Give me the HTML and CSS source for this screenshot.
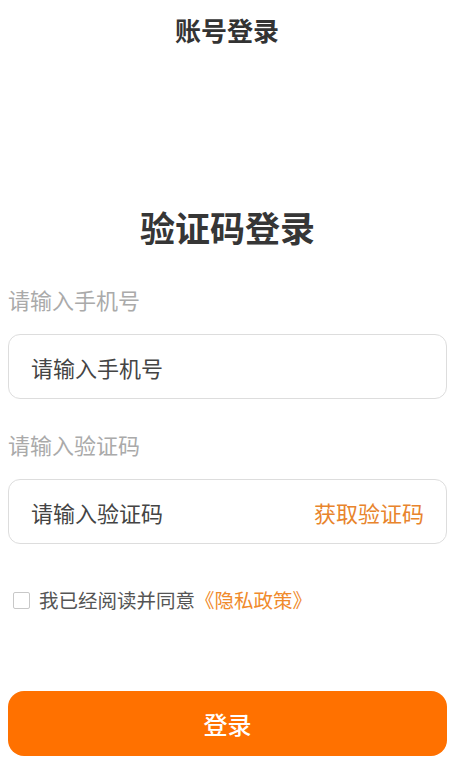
FILE: index.html
```html
<!DOCTYPE html>
<html lang="zh-CN">

<head>
    <meta charset="UTF-8">
    <meta name="viewport" content="width=device-width, initial-scale=1.0">
    <title>账号登录</title>
    <link rel="stylesheet" href="styles.css">
</head>

<body>
    <div class="header">账号登录</div>

    <div class="page">
        <h1 class="title">验证码登录</h1>

        <form class="login-form">
            <label class="field-label" for="phone">请输入手机号</label>
            <div class="field">
                <input type="text" id="phone" placeholder="请输入手机号">
            </div>

            <label class="field-label" for="code">请输入验证码</label>
            <div class="field">
                <input type="text" id="code" placeholder="请输入验证码">
                <span class="get-code">获取验证码</span>
            </div>

            <div class="agree">
                <span class="checkbox"></span>
                <span>我已经阅读并同意</span><span class="link">《隐私政策》</span>
            </div>

            <button type="button" class="submit">登录</button>
        </form>
    </div>
</body>

</html>
```

FILE: styles.css
```css
body {
    margin: 0;
    background-color: #fff;
    font-family: "Noto Sans CJK SC", "Noto Sans", sans-serif;
    color: #333;
}

.header {
    height: 60px;
    line-height: 60px;
    text-align: center;
    font-size: 26px;
    font-weight: bold;
    color: #333;
}

.page {
    padding: 0 7px 0 8px;
}

.title {
    margin: 142px 0 0;
    height: 50px;
    line-height: 50px;
    text-align: center;
    font-size: 35px;
    font-weight: bold;
    color: #363636;
}

.login-form {
    display: flex;
    flex-direction: column;
}

.field-label {
    line-height: 30px;
    font-size: 22px;
    color: #aaa;
    margin-top: 32px;
}

.field-label + .field {
    margin-top: 20px;
}

.field + .field-label {
    margin-top: 30px;
}

.field {
    display: flex;
    align-items: center;
    height: 65px;
    box-sizing: border-box;
    border: 1px solid #ddd;
    border-radius: 12px;
    padding: 0 22px;
}

.field input {
    flex: 1;
    min-width: 0;
    border: none;
    outline: none;
    padding: 0;
    font-family: inherit;
    font-size: 22px;
    color: #444;
    background: transparent;
}

.field input::placeholder {
    color: #444;
}

.get-code {
    font-size: 22px;
    color: #e8842c;
    white-space: nowrap;
}

.agree {
    display: flex;
    align-items: center;
    margin-top: 44px;
    padding-left: 5px;
    line-height: 24px;
    font-size: 19.5px;
    color: #555;
}

.checkbox {
    width: 17px;
    height: 17px;
    box-sizing: border-box;
    border: 1px solid #c8c8c8;
    border-radius: 2px;
    margin-right: 9px;
}

.link {
    color: #f08a2c;
}

.submit {
    margin-top: 79px;
    height: 65px;
    border: none;
    border-radius: 16px;
    background-color: #ff7100;
    color: #fff;
    font-family: inherit;
    font-size: 24px;
    font-weight: 500;
    cursor: pointer;
}
```
